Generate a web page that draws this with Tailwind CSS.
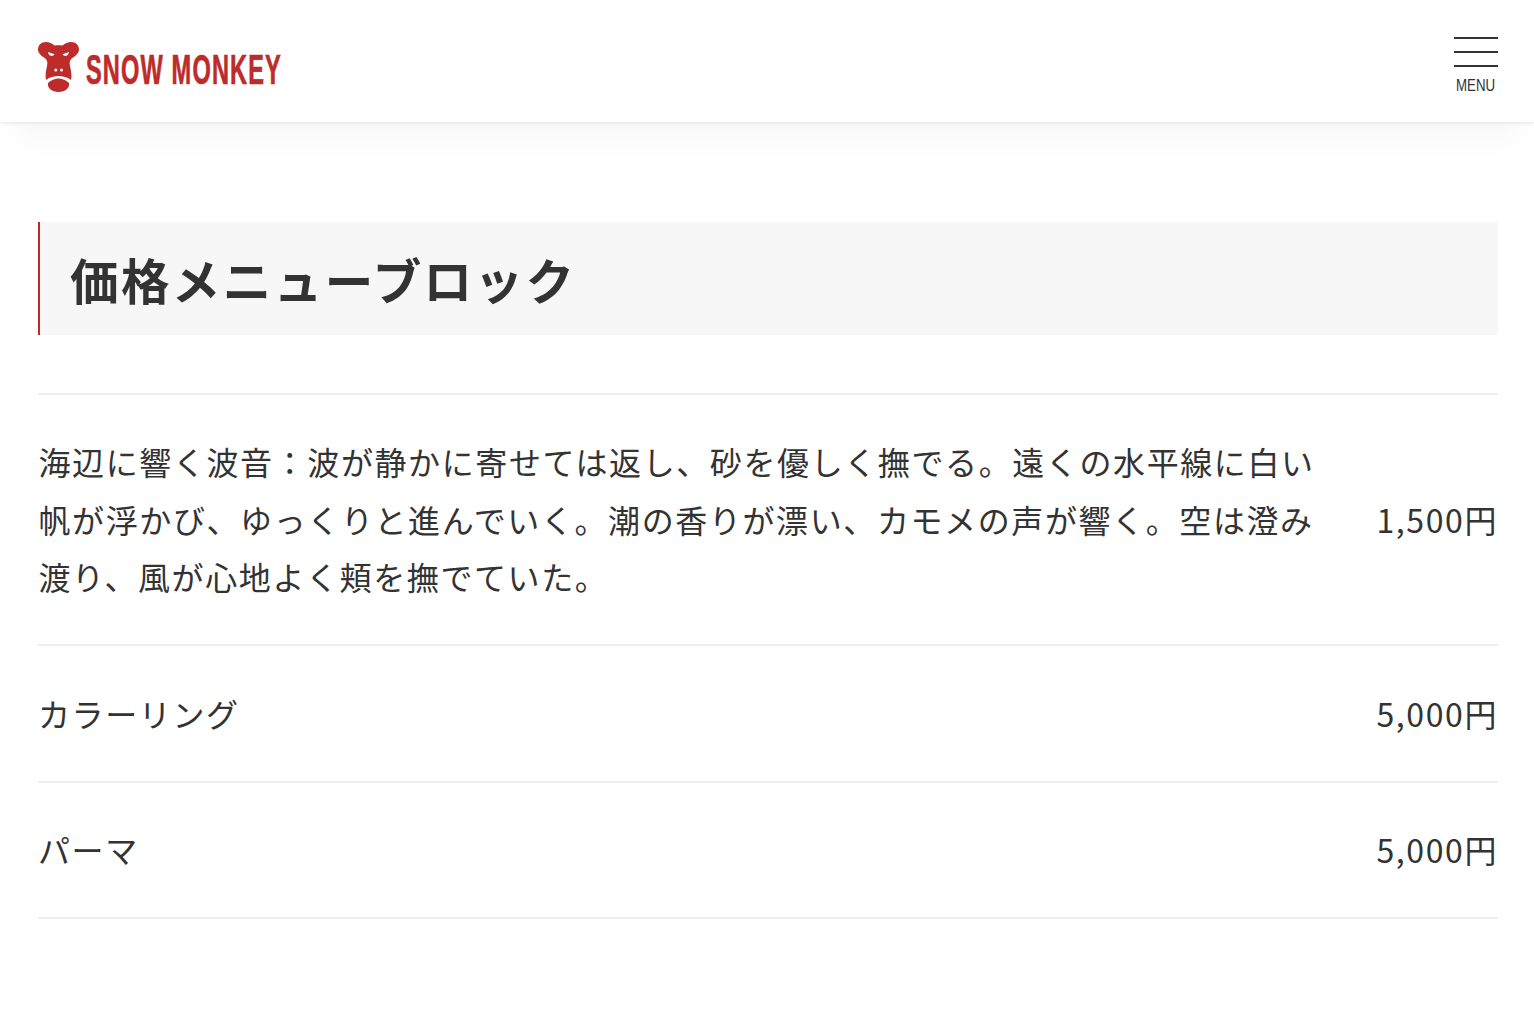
<!DOCTYPE html>
<html lang="ja">
<head>
    <meta charset="UTF-8" />
    <title>価格メニューブロック | SNOW MONKEY</title>
    <script src="https://cdn.jsdelivr.net/npm/@tailwindcss/browser@4"></script>
</head>
<body class="bg-white text-[#333] font-['Noto_Sans_CJK_JP','Noto_Sans',sans-serif]">
<!-- ヘッダー -->
<header class="h-[122px] px-[36px] pl-[38px] flex items-center justify-between bg-white shadow-[0_1px_4px_rgba(0,0,0,0.1),0_34px_32px_-16px_rgba(0,0,0,0.03)]">
    <a href="#" class="flex items-center w-[244px] h-[50px] mt-[12px] gap-[7px]">
        <svg class="w-[41px] h-[50px] shrink-0" viewBox="0 0 41 50" fill="#bd2b2b">
            <path d="M8 0C11 0 14 1.500 16.500 3.500C19 3 22 3 24.500 3.500C27 1.500 30 0 33 0C38 0 41 3.500 41 7.500C41 11 38 13.500 35 15.500C32 17.500 31 20 32 24C33 29 34 33 33 38C29 35 25 34 20.500 34C16 34 12 35 8 38C7 33 8 29 9 24C10 20 9 17.500 6 15.500C3 13.500 0 11 0 7.500C0 3.500 3 0 8 0Z"/>
            <path d="M10 41C13 38 17 36.500 20.500 36.500C24 36.500 28 38 31 41C32 46 27 50 20.500 50C14 50 9 46 10 41Z"/>
            <path d="M10 10L16.500 12.300C15.500 14 13.500 14.200 12 13.500C11 13 10.300 11.500 10 10Z" fill="#fff"/>
            <path d="M31 10L24.500 12.300C25.500 14 27.500 14.200 29 13.500C30 13 30.700 11.500 31 10Z" fill="#fff"/>
            <circle cx="17.800" cy="28" r="1.500" fill="#fff"/>
            <circle cx="23.500" cy="28" r="1.500" fill="#fff"/>
        </svg>
        <span class="block font-['Liberation_Sans',sans-serif] font-bold text-[42px] leading-none text-[#bd2b2b] [-webkit-text-stroke:0.7px_#bd2b2b] whitespace-nowrap origin-left scale-x-[0.562] mt-[6px] tracking-[2px]">SNOW MONKEY</span>
    </a>
    <button class="flex flex-col items-center w-[44px] mt-[11px]">
        <span class="flex flex-col gap-[12px] w-[44px]">
            <span class="block h-[2px] bg-[#333]"></span>
            <span class="block h-[2px] bg-[#333]"></span>
            <span class="block h-[2px] bg-[#333]"></span>
        </span>
        <span class="block mt-[9px] font-['Liberation_Sans',sans-serif] text-[16px] leading-[20px] text-[#333] scale-x-[0.83]">MENU</span>
    </button>
</header>

<main class="px-[36px] pl-[38px] pt-[100px]">
    <h2 class="h-[113px] flex items-center pl-[30px] pt-[2px] border-l-[2px] border-[#bd2b2b] bg-[#f7f7f7] text-[48.5px] leading-none font-bold tracking-[2.43px]">価格メニューブロック</h2>

    <!-- 価格メニュー -->
    <ul class="mt-[58px] border-t-2 border-[#eee] text-[32px] leading-[57.6px] tracking-[1.6px]">
        <li class="h-[251px] flex items-center justify-between border-b-2 border-[#eee]">
            <div class="w-[1280px] pl-[0.5px]">海辺に響く波音：波が静かに寄せては返し、砂を優しく撫でる。遠くの水平線に白い帆が浮かび、ゆっくりと進んでいく。潮の香りが漂い、カモメの声が響く。空は澄み渡り、風が心地よく頬を撫でていた。</div>
            <div>1,500円</div>
        </li>
        <li class="h-[137px] flex items-center justify-between border-b-2 border-[#eee]">
            <div>カラーリング</div>
            <div>5,000円</div>
        </li>
        <li class="h-[136px] flex items-center justify-between border-b-2 border-[#eee]">
            <div>パーマ</div>
            <div>5,000円</div>
        </li>
    </ul>
</main>
</body>
</html>
